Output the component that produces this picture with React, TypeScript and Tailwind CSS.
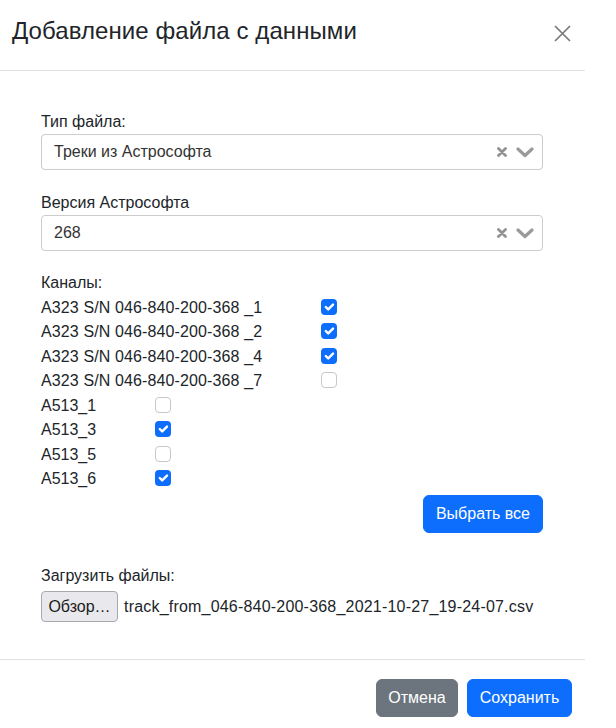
import React from "react";

const font = { fontFamily: '"Liberation Sans", Arial, sans-serif' };

function Check({ checked }: { checked: boolean }) {
  return checked ? (
    <span className="mt-[3px] ml-[59px] flex h-4 w-4 shrink-0 items-center justify-center rounded-[4px] bg-[#0d6efd]">
      <svg width="16" height="16" viewBox="0 0 20 20">
        <path d="M6 10l3 3 6-6" fill="none" stroke="#fff" strokeWidth="3" strokeLinecap="round" strokeLinejoin="round" />
      </svg>
    </span>
  ) : (
    <span className="mt-[3px] ml-[59px] block h-4 w-4 shrink-0 rounded-[4px] border border-[#c6c8ca] bg-white" />
  );
}

function SelectBox({ value }: { value: string }) {
  return (
    <div className="flex h-[36px] items-center justify-between rounded-[4px] border border-[#cccccc] bg-white pl-[12px] pr-[8px]">
      <span className="text-[16px] text-[#333333]">{value}</span>
      <div className="flex items-center gap-[9px]">
        <svg width="10" height="10" viewBox="0 0 10 10">
          <path d="M1.5 1.5L8.5 8.5M8.5 1.5L1.5 8.5" stroke="#929292" strokeWidth="2.8" strokeLinecap="round" />
        </svg>
        <svg width="18" height="11" viewBox="0 0 18 11">
          <path d="M2 2L9 8.5L16 2" fill="none" stroke="#9a9a9a" strokeWidth="3.2" strokeLinecap="round" strokeLinejoin="round" />
        </svg>
      </div>
    </div>
  );
}

const channels: [string, boolean, boolean][] = [
  ["А323 S/N 046-840-200-368 _1", true, true],
  ["А323 S/N 046-840-200-368 _2", true, true],
  ["А323 S/N 046-840-200-368 _4", true, true],
  ["А323 S/N 046-840-200-368 _7", false, true],
  ["А513_1", false, false],
  ["А513_3", true, false],
  ["А513_5", false, false],
  ["А513_6", true, false],
];

export default function App() {
  return (
    <div className="min-h-[728px] w-[616px] bg-white text-[#212529]" style={font}>
      <div className="w-[585px]">
        <div className="flex h-[71px] items-start justify-between border-b border-[#dee2e6] pl-[12px] pr-[13px] pt-[13px]">
          <h5 className="text-[24px] leading-[36px] tracking-[0.08px] text-[#212529]">Добавление файла с данными</h5>
          <svg className="mt-[12px] mr-[1px]" width="17" height="17" viewBox="0 0 17 17">
            <path d="M1 1L16 16M16 1L1 16" stroke="#7a7a7a" strokeWidth="1.7" />
          </svg>
        </div>

        <div className="pl-[41px] pr-[42px] pt-[39px] pb-[37px] text-[16px] leading-[24px]">
          <div>Тип файла:</div>
          <SelectBox value="Треки из Астрософта" />
          <div className="mt-[21px]">Версия Астрософта</div>
          <SelectBox value="268" />
          <div className="mt-[20px] h-[24.5px]">Каналы:</div>
          {channels.map(([name, c, long]) => (
            <div key={name} className="flex h-[24.5px] items-start">
              <span className={long ? "whitespace-pre tracking-[0.12px]" : "whitespace-pre"}>{name}</span>
              <Check checked={c} />
            </div>
          ))}
          <div className="mt-[3.5px] flex justify-end">
            <button className="h-[38px] rounded-[6px] border border-[#0d6efd] bg-[#0d6efd] px-[12px] text-[16px] text-white">
              Выбрать все
            </button>
          </div>
          <div className="mt-[31px]">Загрузить файлы:</div>
          <div className="mt-[3px] flex items-center gap-[6px]">
            <button className="h-[31px] w-[77px] rounded-[4px] border border-[#a9a9b0] bg-[#e9e9ed] text-[16px] text-[#1b1b1b]">
              Обзор…
            </button>
            <span className="tracking-[0.2px]">track_from_046-840-200-368_2021-10-27_19-24-07.csv</span>
          </div>
        </div>

        <div className="flex justify-end gap-[9px] border-t border-[#dee2e6] pr-[13px] pt-[19px]">
          <button className="h-[38px] w-[82px] rounded-[6px] border border-[#6c757d] bg-[#6c757d] text-[16px] text-white">
            Отмена
          </button>
          <button className="h-[38px] w-[105px] rounded-[6px] border border-[#0d6efd] bg-[#0d6efd] text-[16px] text-white">
            Сохранить
          </button>
        </div>
      </div>
    </div>
  );
}
